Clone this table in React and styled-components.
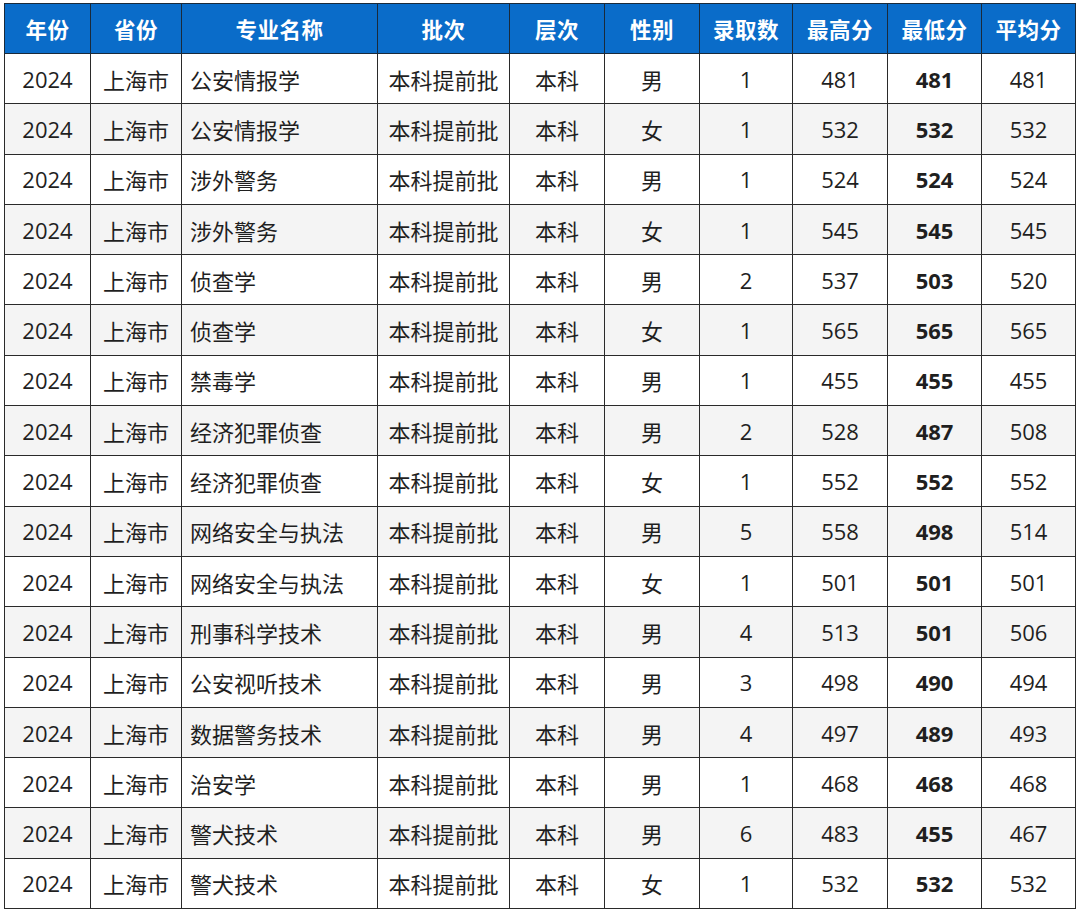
import React from "react";
import styled, { createGlobalStyle } from "styled-components";

const Global = createGlobalStyle`
  html, body { margin: 0; padding: 0; background: #fff; }
  body { font-family: "Open Sans", "Noto Sans CJK SC", sans-serif; }
`;

const Wrap = styled.div`
  padding: 3px 6px 0 4px;
`;

const Table = styled.table`
  border-collapse: collapse;
  width: 1071px;
  table-layout: fixed;
  font-family: "Open Sans", "Noto Sans CJK SC", sans-serif;
  font-size: 22px;
  color: #1f1f1f;
`;

const Th = styled.th`
  background: #0a6cc9;
  color: #fff;
  font-weight: 700;
  font-size: 21.5px;
  height: 49px;
  padding: 0;
  border: 1px solid #1a2a3a;
  text-align: center;
  letter-spacing: 0.5px;
`;

const Row = styled.tr`
  background: ${(p) => (p.$alt ? "#f4f4f4" : "#ffffff")};
`;

const Td = styled.td`
  height: 49.3px;
  padding: 0 ${(p) => (p.$left ? "8px" : "0")};
  border: 1px solid #2a2a2a;
  text-align: ${(p) => (p.$left ? "left" : "center")};
  font-weight: ${(p) => (p.$bold ? 700 : 400)};
  white-space: nowrap;
`;

const cols = [86, 91, 196, 132, 95, 95, 93, 95, 94, 94];
const heads = ["年份", "省份", "专业名称", "批次", "层次", "性别", "录取数", "最高分", "最低分", "平均分"];

const data = [
  ["公安情报学", "男", 1, 481, 481, 481],
  ["公安情报学", "女", 1, 532, 532, 532],
  ["涉外警务", "男", 1, 524, 524, 524],
  ["涉外警务", "女", 1, 545, 545, 545],
  ["侦查学", "男", 2, 537, 503, 520],
  ["侦查学", "女", 1, 565, 565, 565],
  ["禁毒学", "男", 1, 455, 455, 455],
  ["经济犯罪侦查", "男", 2, 528, 487, 508],
  ["经济犯罪侦查", "女", 1, 552, 552, 552],
  ["网络安全与执法", "男", 5, 558, 498, 514],
  ["网络安全与执法", "女", 1, 501, 501, 501],
  ["刑事科学技术", "男", 4, 513, 501, 506],
  ["公安视听技术", "男", 3, 498, 490, 494],
  ["数据警务技术", "男", 4, 497, 489, 493],
  ["治安学", "男", 1, 468, 468, 468],
  ["警犬技术", "男", 6, 483, 455, 467],
  ["警犬技术", "女", 1, 532, 532, 532],
];

export default function App() {
  return (
    <Wrap>
      <Global />
      <Table>
        <colgroup>
          {cols.map((w, i) => (
            <col key={i} style={{ width: w }} />
          ))}
        </colgroup>
        <thead>
          <tr>
            {heads.map((h) => (
              <Th key={h}>{h}</Th>
            ))}
          </tr>
        </thead>
        <tbody>
          {data.map((r, i) => (
            <Row key={i} $alt={i % 2 === 1}>
              <Td>2024</Td>
              <Td>上海市</Td>
              <Td $left>{r[0]}</Td>
              <Td>本科提前批</Td>
              <Td>本科</Td>
              <Td>{r[1]}</Td>
              <Td>{r[2]}</Td>
              <Td>{r[3]}</Td>
              <Td $bold>{r[4]}</Td>
              <Td>{r[5]}</Td>
            </Row>
          ))}
        </tbody>
      </Table>
    </Wrap>
  );
}
